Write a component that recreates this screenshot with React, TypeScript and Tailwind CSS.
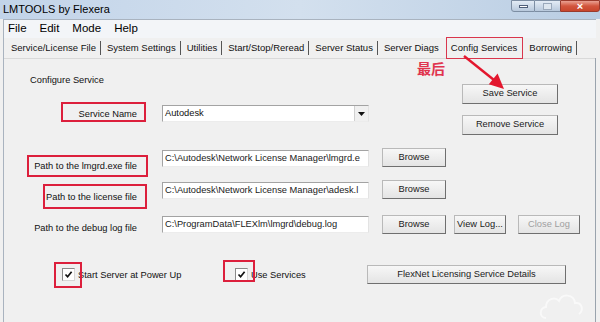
import React from 'react';

const btn =
  'flex items-center justify-center border border-[#b9b9b9] border-r-[#6f6f6f] border-b-[#6f6f6f] bg-gradient-to-b from-[#f7f7f7] to-[#e4e4e4] text-[9.3px] text-[#1a1a1a] leading-none';
const field =
  'flex items-center h-[17px] w-[207px] bg-white border border-[#a3a3a3] border-r-[#e3e3e3] border-b-[#ececec] px-[2px] text-[9.3px] text-[#1a1a1a] whitespace-nowrap overflow-hidden leading-none';

function Check() {
  return (
    <div className="w-[13px] h-[13px] bg-white border border-[#8a8a8a] border-r-[#d6d6d6] border-b-[#d6d6d6] flex items-center justify-center">
      <svg width="9" height="9" viewBox="0 0 9 9">
        <path d="M1.5 4.5 L3.6 6.8 L7.6 1.8" fill="none" stroke="#111" strokeWidth="1.7" />
      </svg>
    </div>
  );
}

export default function App() {
  const tabs = [
    { t: 'Service/License File', sep: true },
    { t: 'System Settings', sep: true },
    { t: 'Utilities', sep: true },
    { t: 'Start/Stop/Reread', sep: true },
    { t: 'Server Status', sep: true },
    { t: 'Server Diags', sep: false },
    { t: 'Config Services', sep: false, active: true },
    { t: 'Borrowing', sep: true },
  ];

  return (
    <div className="relative w-[600px] h-[322px] overflow-hidden bg-[#f0f0f0] font-['Liberation_Sans',Arial,sans-serif] text-[#111]">
      {/* title bar */}
      <div className="h-[19px] flex items-start justify-between bg-gradient-to-r from-[#c2d4e9] via-[#d3e0ee] to-[#b9cde3]">
        <div className="pl-[3px] pt-[3px] text-[11px] leading-[13px] text-black">LMTOOLS by Flexera</div>
        <div className="flex h-[12px]">
          <div className="w-[24px] border border-[#7d8ea3] rounded-bl-[3px] bg-gradient-to-b from-[#e3ecf5] to-[#b8c9dc] flex items-center justify-center">
            <div className="w-[9px] h-[3px] bg-white border border-[#50607a]" />
          </div>
          <div className="w-[25px] border-y border-[#7d8ea3] bg-gradient-to-b from-[#e3ecf5] to-[#b8c9dc] flex items-center justify-center">
            <div className="w-[9px] h-[7px] border border-[#9aa9bb] bg-[#dde6ef]" />
          </div>
          <div className="w-[40px] border border-[#9a3a2c] rounded-br-[3px] bg-gradient-to-b from-[#e9a092] via-[#d2553d] to-[#c8452c] flex items-center justify-center text-white text-[11px] font-bold leading-none">
            ×
          </div>
        </div>
      </div>

      {/* client area */}
      <div className="ml-[3px] mr-[4px] border-l border-t border-[#a9b3bf] h-[303px] flex flex-col">
        <div className="h-[18px] flex items-center gap-[13px] pl-[4px] bg-[#f3f5f8] text-[11.5px] leading-none text-black">
          <span>File</span>
          <span>Edit</span>
          <span>Mode</span>
          <span>Help</span>
        </div>

        {/* tab strip */}
        <div className="h-[20px] flex items-center pl-[1px] text-[9.5px] leading-none">
          {tabs.map((tab) => (
            <div
              key={tab.t}
              className={
                'flex items-center h-[14px] pl-[6px] pr-[4px] ' +
                (tab.sep ? 'border-r border-[#555]' : '') +
                (tab.active ? ' ml-[2px] pr-[6px]' : '')
              }
            >
              {tab.t}
            </div>
          ))}
        </div>

        {/* panel */}
        <div className="flex-1 border-t border-[#d9d9d9] text-[9.3px] leading-[12px]">
          <div className="flex">
            <div className="w-[458px]">
              <div className="pt-[15px] pl-[26px]">Configure Service</div>
              <div className="flex items-center mt-[19px]">
                <div className="w-[133px] text-right">Service Name</div>
                <div className="ml-[25px] flex h-[17px] w-[207px] bg-white border border-[#a3a3a3] border-r-[#e3e3e3] border-b-[#ececec]">
                  <div className="flex-1 flex items-center px-[2px] leading-none">Autodesk</div>
                  <div className="w-[14px] border-l border-[#d0d0d0] bg-[#f0f0f0] flex items-center justify-center">
                    <svg width="7" height="4" viewBox="0 0 7 4">
                      <path d="M0 0 H7 L3.5 4 Z" fill="#111" />
                    </svg>
                  </div>
                </div>
              </div>
            </div>
            <div className="pt-[25px] flex flex-col gap-[11px]">
              <div className={btn + ' w-[96px] h-[20px]'}>Save Service</div>
              <div className={btn + ' w-[96px] h-[20px]'}>Remove Service</div>
            </div>
          </div>

          <div className="flex items-start mt-[13px]">
            <div className="w-[133px] text-right mt-[12px]">Path to the lmgrd.exe file</div>
            <div className={field + ' ml-[25px] mt-[2px]'}>{'C:\\Autodesk\\Network License Manager\\lmgrd.e'}</div>
            <div className={btn + ' ml-[13px] w-[64px] h-[19px]'}>Browse</div>
          </div>

          <div className="flex items-start mt-[8px]">
            <div className="w-[133px] text-right mt-[11px]">Path to the license file</div>
            <div className={field + ' ml-[25px] mt-[2px]'}>{'C:\\Autodesk\\Network License Manager\\adesk.l'}</div>
            <div className={btn + ' ml-[13px] w-[64px] h-[19px]'}>Browse</div>
          </div>

          <div className="flex items-start mt-[12px]">
            <div className="w-[133px] text-right mt-[7px]">Path to the debug log file</div>
            <div className={field + ' ml-[25px] mt-[1px]'}>{'C:\\ProgramData\\FLEXlm\\lmgrd\\debug.log'}</div>
            <div className={btn + ' ml-[13px] w-[64px] h-[19px]'}>Browse</div>
            <div className={btn + ' ml-[8px] w-[52px] h-[19px]'}>View Log...</div>
            <div className={btn + ' ml-[12px] w-[62px] h-[19px] text-[#a0a0a0]'}>Close Log</div>
          </div>

          <div className="flex items-center mt-[31px] pl-[58px]">
            <div className="w-[173px] flex items-center gap-[3px]">
              <Check />
              <span>Start Server at Power Up</span>
            </div>
            <div className="w-[132px] flex items-center gap-[3px]">
              <Check />
              <span>Use Services</span>
            </div>
            <div className={btn + ' w-[199px] h-[19px]'}>FlexNet Licensing Service Details</div>
          </div>
        </div>
      </div>

      {/* panel right edge */}
      <div className="absolute left-[595px] top-[58px] w-px h-[264px] bg-[#9aa3ad]" />

      {/* red annotation boxes */}
      <div className="absolute left-[446px] top-[37px] w-[77px] h-[22px] border-[1.5px] border-[#d9364d]" />
      <div className="absolute left-[61px] top-[102px] w-[85px] h-[20px] border-2 border-[#dc1f3c]" />
      <div className="absolute left-[27px] top-[155px] w-[121px] h-[22px] border-2 border-[#dc1f3c]" />
      <div className="absolute left-[43px] top-[184px] w-[104px] h-[25px] border-2 border-[#dc1f3c]" />
      <div className="absolute left-[54px] top-[262px] w-[28px] h-[26px] border-2 border-[#dc1f3c]" />
      <div className="absolute left-[223px] top-[260px] w-[32px] h-[22px] border-2 border-[#dc1f3c]" />

      {/* note + arrow */}
      <div className="absolute left-[417px] top-[60px] text-[14px] leading-[16px] font-bold text-[#e0344e] font-['Noto_Sans_CJK_SC',sans-serif]">
        最后
      </div>
      <svg className="absolute left-0 top-0" width="600" height="322" viewBox="0 0 600 322">
        <line x1="464" y1="56" x2="494" y2="80" stroke="#e3172e" strokeWidth="2.5" />
        <path d="M504 89 L488.8 84.2 L497.6 73.6 Z" fill="#e3172e" />
      </svg>

      {/* faint watermark */}
      <svg className="absolute left-[538px] top-[288px] opacity-60" width="62" height="34" viewBox="0 0 62 34">
        <path
          d="M8 30 C1 30 1 20 8 19 C8 11 17 8 21 13 C24 5 36 6 37 15 C44 14 46 22 41 26"
          fill="none"
          stroke="#ffffff"
          strokeWidth="2"
        />
      </svg>
    </div>
  );
}
